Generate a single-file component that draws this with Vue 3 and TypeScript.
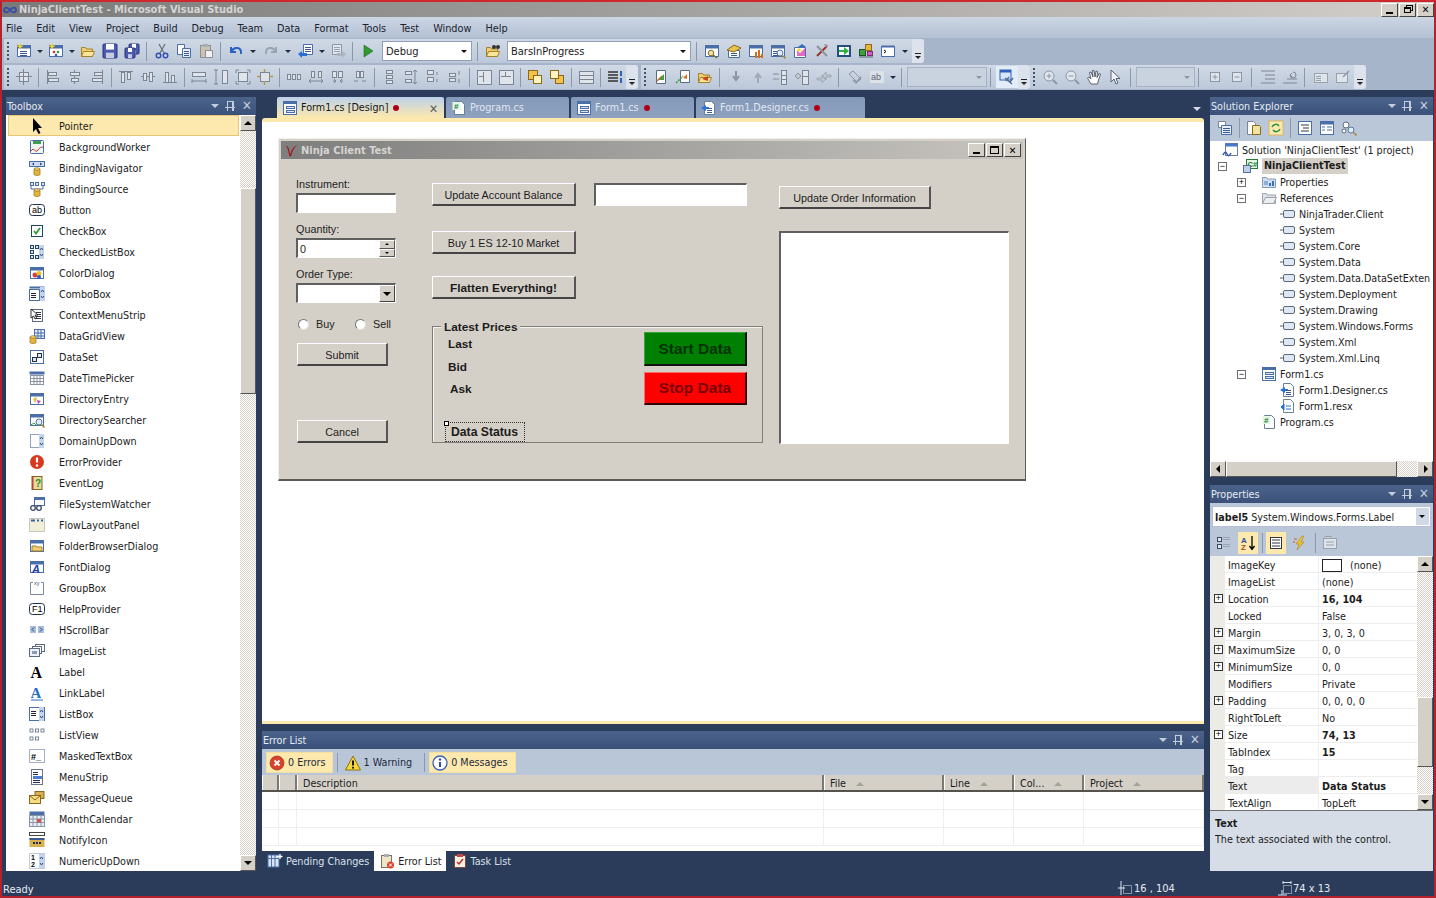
<script setup lang="ts">
// small svg helpers for the 16x16 icons
const win = (c: string) => `<rect x='1.5' y='2.5' width='13' height='11' fill='#fff' stroke='${c}'/><rect x='1.5' y='2.5' width='13' height='3' fill='${c}'/>`
const cyl = `<path d='M1 9v5.5c0 1.2 6 1.2 6 0V9z' fill='#e6b53d' stroke='#94701a' stroke-width='.7'/><ellipse cx='4' cy='9' rx='3' ry='1.2' fill='#f6dc84' stroke='#94701a' stroke-width='.7'/>`
const star = `<path d='M4 0l.9 2.3L7.5 3 5 4.2 4 6.5 3 4.2.5 3l2.6-.7z' fill='#f6d22c'/>`
const lines = (x: number, y: number, n: number, w = 5, c = '#3a5a90') => Array.from({ length: n }, (_, i) => `<path d='M${x} ${y + i * 2 + .5}h${w}' stroke='${c}'/>`).join('')
const folder = `<path d='M1.5 13.5v-9h4l1 1.5h6v7.5z' fill='#f1cf6e' stroke='#a5812a'/><path d='M1.5 13.5l2-5h11l-2 5z' fill='#fbe59b' stroke='#a5812a'/>`
const floppy = (x: number, y: number, s: number) => `<rect x='${x}' y='${y}' width='${s}' height='${s}' rx='1' fill='#4a5bb0' stroke='#2a3678'/><rect x='${x + 3}' y='${y}' width='${s - 6}' height='${s * .4}' fill='#fff'/><rect x='${x + 3}' y='${y + s * .62}' width='${s - 6}' height='${s * .38}' fill='#c8cbe4'/>`
const box = (x: number, y: number, w: number, h: number, c = '#7b8594') => `<rect x='${x + .5}' y='${y + .5}' width='${w}' height='${h}' fill='#dfe4ea' stroke='${c}'/>`
const vl = (x: number, y: number, h: number, c = '#7b8594') => `<path d='M${x + .5} ${y}v${h}' stroke='${c}' fill='none'/>`
const hl = (x: number, y: number, w: number, c = '#7b8594') => `<path d='M${x} ${y + .5}h${w}' stroke='${c}' fill='none'/>`
const updn = (x: number) => `<rect x='${x}' y='1' width='5' height='14' fill='#c4d4ec'/><path d='M${x + 1} 6l1.5-2 1.5 2M${x + 1} 10l1.5 2 1.5-2' stroke='#2f4a80' fill='none'/>`
const mag = `<circle cx='10' cy='10' r='3' fill='#dcecff' stroke='#5c7796'/><path d='M12.5 12.5l3 3' stroke='#a88a3a' stroke-width='1.6'/>`
const txt = (t: string, x: number, y: number, s: number, c = '#000', extra = '') => `<text x='${x}' y='${y}' font-size='${s}' fill='${c}' font-family='Liberation Sans' ${extra}>${t}</text>`

const icons: Record<string, string> = {
  // standard toolbar
  newproj: win('#4a6fa8') + lines(4, 8, 3, 7) + star,
  additem: win('#4a6fa8') + `<circle cx='6' cy='9' r='1.3' fill='#d03030'/><circle cx='10' cy='9' r='1.3' fill='#30a040'/><circle cx='8' cy='12' r='1.3' fill='#3060d0'/>` + star,
  open: folder,
  save: floppy(1, 1, 14),
  saveall: floppy(5, 1, 10) + floppy(1, 5, 10),
  cut: `<path d='M5 1l5 9M11 1l-5 9' stroke='#6a7484' stroke-width='1.3'/><circle cx='4.5' cy='12.5' r='2.3' fill='none' stroke='#3050b0' stroke-width='1.4'/><circle cx='11.5' cy='12.5' r='2.3' fill='none' stroke='#3050b0' stroke-width='1.4'/>`,
  copy: `<path d='M1.5 1.5h7v10h-7z' fill='#fff' stroke='#4a6fa8'/><path d='M6.5 5.5h8v9h-8z' fill='#e9f0fa' stroke='#4a6fa8'/>` + lines(8, 8, 3, 5),
  paste: `<rect x='2.5' y='2.5' width='10' height='12' fill='#c9c3b0' stroke='#8d8f94'/><rect x='5' y='1' width='5' height='3' fill='#a9adb4'/><path d='M7.5 7.5h7v7h-7z' fill='#eef1f5' stroke='#8d8f94'/>`,
  undo: `<path d='M3 4v5h5M3.5 8.5C6 3 14 4 13 11' fill='none' stroke='#2a60c0' stroke-width='2'/>`,
  redo: `<path d='M13 4v5H8M12.5 8.5C10 3 2 4 3 11' fill='none' stroke='#99a3b2' stroke-width='2'/>`,
  navback: `<path d='M5.5 1.5h9v10h-9z' fill='#fff' stroke='#4a6fa8'/>` + lines(7, 4, 3, 6) + `<path d='M0 11l4-3v2h5v3H4v2z' fill='#2a70d8'/>`,
  navfwd: `<path d='M2.5 1.5h9v10h-9z' fill='#e2e6ec' stroke='#8d97a6'/>` + lines(4, 4, 3, 6, '#9aa3b0') + `<path d='M16 11l-4-3v2H7v3h5v2z' fill='#aab3c0'/>`,
  play: `<path d='M4 2l9 6-9 6z' fill='#2f9a2f' stroke='#1f6a1f' stroke-width='.6'/>`,
  find: folder + `<circle cx='9' cy='4' r='2' fill='#333'/><circle cx='13' cy='4' r='2' fill='#333'/>`,
  w1: win('#4a6fa8') + `<circle cx='7' cy='10' r='2.8' fill='#f2e2a0' stroke='#7a6a30'/><path d='M9 12l4 3' stroke='#7a6a30' stroke-width='1.5'/>`,
  w2: `<path d='M2.5 7.5h11v7h-11z' fill='#fff' stroke='#4a6fa8'/><path d='M1 7l7-5 7 3-7 4z' fill='#e7c24c' stroke='#8a6a1a'/>` + lines(5, 10, 2, 6),
  w3: win('#4a6fa8') + `<path d='M7 15V9h2v6zM10 15V7h2v8zM13 15v-4h2v4z' fill='#d86a20'/>`,
  w4: win('#4a6fa8') + lines(3, 8, 3, 6) + mag,
  w5: `<path d='M2.5 4.5h11v10h-11z' fill='#fff' stroke='#4a6fa8'/><path d='M5 7l3 3 5-5v8H5z' fill='#e86ac0'/><path d='M4 8l3-3 3 3' fill='#f6d22c'/><path d='M10 1l4 3h-8z' fill='#3070c0'/>`,
  tools: `<path d='M3 13L13 3' stroke='#a03020' stroke-width='2'/><path d='M3 3l10 10' stroke='#8a929e' stroke-width='2'/><path d='M10 1l4 1-2 3z' fill='#8a929e'/>`,
  go: `<rect x='1' y='2' width='14' height='12' fill='#25507e'/><rect x='3' y='4' width='10' height='8' fill='#fff'/><path d='M3 7h5V4l5 4-5 4V9H3z' fill='#30b040'/>`,
  cls: `<rect x='1' y='13' width='14' height='2' fill='#8b98a8'/><rect x='1.5' y='6.5' width='6' height='6' fill='#40a040' stroke='#205020'/><rect x='7.5' y='1.5' width='6' height='6' fill='#e6b53d' stroke='#8a6a1a'/><rect x='9.5' y='8.5' width='5' height='4' fill='#d060c0' stroke='#7a3070'/>`,
  cmd: `<rect x='1.5' y='3.5' width='13' height='10' fill='#fff' stroke='#4a6fa8'/><rect x='1.5' y='2.5' width='13' height='2' fill='#4a6fa8'/><path d='M4 7l2 1.5L4 10' stroke='#000' fill='none'/>`,
  // layout toolbar, all greyed out
  snap: box(3, 3, 9, 9) + hl(0, 7, 16) + vl(7, 0, 16),
  al1: vl(2, 1, 14) + box(3, 3, 8, 3) + box(3, 9, 10, 3),
  al2: vl(7, 1, 14) + box(3, 3, 9, 3) + box(4, 9, 7, 3),
  al3: vl(13, 1, 14) + box(5, 3, 8, 3) + box(3, 9, 10, 3),
  al4: hl(1, 2, 14) + box(3, 3, 3, 10) + box(9, 3, 3, 7),
  al5: hl(1, 7, 14) + box(3, 4, 3, 7) + box(9, 3, 3, 9),
  al6: hl(1, 13, 14) + box(3, 3, 3, 10) + box(9, 6, 3, 7),
  sz1: box(1, 3, 13, 4) + `<path d='M1 12h14M1 10v4M15 10v4' stroke='#7b8594'/>`,
  sz2: box(9, 1, 5, 13) + `<path d='M3 1v14M1 1h4M1 15h4' stroke='#7b8594'/>`,
  sz3: box(3, 3, 9, 9) + `<path d='M1 1h3M1 1v3M15 1h-3M15 1v3M1 15h3M1 15v-3M15 15h-3M15 15v-3' stroke='#7b8594'/>`,
  sz4: box(3, 3, 9, 9) + `<path d='M7.5 0v3M7.5 12v4M0 7.5h3M12 7.5h4' stroke='#b69a4a' stroke-width='1.5'/>`,
  sp1: box(1, 5, 3, 5) + box(6, 5, 3, 5) + box(11, 5, 3, 5),
  sp2: box(3, 2, 3, 6) + box(10, 2, 3, 6) + `<path d='M1 12h14M1 12l2-2M1 12l2 2M15 12l-2-2M15 12l-2 2' stroke='#7b8594' fill='none'/>`,
  sp3: box(2, 2, 4, 6) + box(8, 2, 4, 6) + `<path d='M3 12h3M10 12h3M6 12l-2-2M6 12l-2 2M10 12l2-2M10 12l2 2' stroke='#7b8594' fill='none'/>`,
  sp4: box(4, 2, 3, 6) + box(8, 2, 3, 6) + `<path d='M2 12h4M10 12h4' stroke='#7b8594'/>`,
  vp1: box(5, 1, 6, 3) + box(5, 6, 6, 3) + box(5, 11, 6, 3),
  vp2: box(2, 2, 6, 3) + box(2, 10, 6, 3) + `<path d='M12 1v14M12 1l-2 2M12 1l2 2M12 15l-2-2M12 15l2-2' stroke='#7b8594' fill='none'/>`,
  vp3: box(2, 1, 6, 4) + box(2, 8, 6, 4) + `<path d='M12 3v3M12 10v3' stroke='#7b8594'/>`,
  vp4: box(2, 4, 6, 3) + box(2, 9, 6, 3) + `<path d='M12 2v4M12 10v4' stroke='#7b8594'/>`,
  ch: box(1, 1, 14, 14) + vl(7, 3, 10) + hl(3, 7, 4),
  cv: box(1, 1, 14, 14) + hl(3, 7, 10) + vl(7, 3, 4),
  front: `<rect x='1.5' y='1.5' width='9' height='9' fill='#f2c24a' stroke='#8a6a1a'/><rect x='6.5' y='6.5' width='8' height='8' fill='#fff3c0' stroke='#8a6a1a'/>`,
  back: `<rect x='6.5' y='6.5' width='8' height='8' fill='#f2c24a' stroke='#8a6a1a'/><rect x='1.5' y='1.5' width='8' height='8' fill='#fff3c0' stroke='#8a6a1a'/>`,
  grid: box(1, 2, 14, 12) + hl(1, 6, 14) + hl(1, 10, 14),
  tabord: `<path d='M1 3h10M1 6h10M1 9h10M1 12h10' stroke='#333' stroke-width='1.3'/><path d='M13 2h2v5h-2zM13 9h2v5h-2z' fill='#2f60b8'/>`,
  form1: `<path d='M3.5 1.5h9v13h-9z' fill='#fff' stroke='#5a6a80'/><path d='M5 11l6-6v6z' fill='#40a040'/><path d='M4 12l5-5' stroke='#d07020' stroke-width='1.5'/>`,
  form2: `<path d='M5.5 1.5h9v12h-9z' fill='#fff' stroke='#5a6a80'/><path d='M1 14l7-7' stroke='#30a040' stroke-width='1.5' stroke-dasharray='2 1'/><path d='M8 9l4-4v5z' fill='#d07020'/>`,
  form3: folder + `<path d='M5 10l6-3v5z' fill='#d04020'/>`,
  g1: `<path d='M8 2v8M5 7l3 4 3-4' stroke='#8b95a3' stroke-width='2' fill='none'/>`,
  g2: `<path d='M8 14V6M5 9l3-4 3 4' stroke='#a0a9b5' stroke-width='2' fill='none'/>`,
  g3: box(9, 1, 5, 14) + hl(9, 6, 5) + hl(9, 10, 5) + `<path d='M1 5h6M1 10h6' stroke='#99a3b0' stroke-width='1.5'/>`,
  g4: box(8, 1, 6, 14) + hl(8, 7, 6) + `<path d='M1 7l3-3 3 3-3 3z' fill='#c0c7d1' stroke='#8b95a3'/>`,
  g5: `<path d='M1 9h5V6l4 4-4 4v-3H1zM15 6h-5V3L6 7l4 4V8h5z' fill='#c0c7d1' stroke='#8b95a3' stroke-width='.6'/>`,
  g6: `<path d='M2 5l4-3 8 8-4 3z' fill='none' stroke='#8b95a3'/><path d='M6 11l3 3 5-6' fill='none' stroke='#8b95a3' stroke-width='1.5'/>`,
  ab: `<rect x='1' y='2' width='14' height='12' fill='#dde2e9'/>` + txt('ab', 2, 11, 9, '#5c6675'),
  bind: `<rect x='1' y='1' width='11' height='10' fill='#d8e6fb' stroke='#2f60b8'/><rect x='1' y='1' width='11' height='2.5' fill='#2f60b8'/><path d='M6 9l7 6M10 8l-3 4M14 9l-3 4' stroke='#4f6f90' stroke-width='1.5'/>`,
  zin: `<circle cx='7' cy='7' r='5' fill='#e2e7ee' stroke='#8b95a3'/><path d='M4.5 7h5M7 4.5v5' stroke='#8b95a3'/><path d='M11 11l4 4' stroke='#8b95a3' stroke-width='2'/>`,
  zout: `<circle cx='7' cy='7' r='5' fill='#e2e7ee' stroke='#8b95a3'/><path d='M4.5 7h5' stroke='#8b95a3'/><path d='M11 11l4 4' stroke='#8b95a3' stroke-width='2'/>`,
  hand: `<path d='M5 15L1.5 9l1.5-1 2 2L3.5 3.5 5 3l2 5-.5-6.5H8L9 8l1-6 1.5.5L11 8.5l2-4 1.5.5-2 6-1 4z' fill='#fff' stroke='#3a4454' stroke-width='.8'/>`,
  arrow: `<path d='M3 1v12l3-3 2 5 2-1-2-4.5h4z' fill='#eef1f5' stroke='#5a6474'/>`,
  plusb: `<rect x='3.5' y='3.5' width='9' height='9' fill='#dfe4ea' stroke='#8b95a3'/><path d='M5.5 8h5M8 5.5v5' stroke='#8b95a3'/>`,
  minusb: `<rect x='3.5' y='3.5' width='9' height='9' fill='#dfe4ea' stroke='#8b95a3'/><path d='M5.5 8h5' stroke='#8b95a3'/>`,
  ind1: `<path d='M1 2h14M5 6h10M5 10h10M1 14h14' stroke='#7b8594'/>`,
  ind2: `<path d='M1 14h14M5 10h10M11 3a3 3 0 1 1-3 3M8 6l2-2M8 6l2 2' stroke='#7b8594' fill='none'/>`,
  cm1: `<rect x='1.5' y='4.5' width='13' height='9' fill='#dfe4ea' stroke='#98a2af'/>` + lines(3, 7, 3, 5, '#98a2af'),
  cm2: `<rect x='1.5' y='4.5' width='11' height='9' fill='#dfe4ea' stroke='#98a2af'/><path d='M8 8l6-6' stroke='#8b95a3' stroke-width='1.5'/>`,
  // toolbox
  pointer: `<path d='M4 0v14l3-3 2.5 5 2-1L9 10h4z' fill='#000'/>`,
  bgw: `<rect x='1.5' y='1.5' width='13' height='13' rx='1' fill='#eef6ee' stroke='#4a6fa8'/><rect x='4' y='2' width='8' height='3' fill='#40a050'/><path d='M2 12c3-5 4 3 7-1s3-2 5-3' stroke='#c03030' fill='none'/>`,
  bnav: `<rect x='.5' y='1.5' width='15' height='5' fill='#cfdcf2' stroke='#4a6fa8'/><path d='M3 4l2-1.5v3zM13 4l-2-1.5v3z' fill='#204080'/><g transform='translate(4 0)'>${cyl}</g>`,
  bsrc: box(1, 1, 3, 3, '#4a6fa8') + box(6, 1, 3, 3, '#4a6fa8') + box(12, 1, 3, 3, '#4a6fa8') + `<path d='M2 5v3h12V5' stroke='#4a6fa8' fill='none'/><g transform='translate(4 0)'>${cyl}</g>`,
  button: `<rect x='.5' y='2.5' width='15' height='11' rx='3' fill='#fff' stroke='#20304a'/>` + txt('ab', 3, 11, 9),
  check: `<rect x='2.5' y='2.5' width='11' height='11' fill='#fff' stroke='#20456a'/><path d='M5 8l2 2.5L11 5' stroke='#2a9a3a' stroke-width='1.8' fill='none'/>`,
  clb: box(1, 1, 3, 3, '#20456a') + box(1, 6, 3, 3, '#20456a') + box(1, 11, 3, 3, '#20456a') + box(6, 1, 3, 3, '#20456a') + box(6, 11, 3, 3, '#20456a') + updn(10),
  color: win('#4a6fa8') + `<circle cx='6' cy='10' r='2.5' fill='#d04040'/><circle cx='10' cy='8.5' r='2.5' fill='#e8c030'/><circle cx='10' cy='12' r='2' fill='#3060c0'/>`,
  combo: `<rect x='.5' y='.5' width='15' height='2' fill='#4a6fa8'/><rect x='.5' y='3.5' width='10' height='11' fill='#fff' stroke='#4a6fa8'/>` + lines(2, 7, 3, 5, '#223') + updn(11),
  ctx: `<rect x='3.5' y='2.5' width='10' height='12' fill='#fff' stroke='#5a6a80'/>` + lines(7, 5, 4, 5, '#334') + `<path d='M2 2v9l2.5-2 1.5 3 1.5-1-1.5-3H9z' fill='#fff' stroke='#000' stroke-width='.8'/>`,
  dgv: `<rect x='5.5' y='1.5' width='10' height='9' fill='#e4ecf8' stroke='#4a6fa8'/><path d='M5.5 5h10M5.5 8h10M9 1.5v9M12 1.5v9' stroke='#4a6fa8'/>` + cyl,
  dataset: `<rect x='1.5' y='1.5' width='13' height='13' fill='#fff' stroke='#4a6fa8'/>` + box(3, 8, 4, 4, '#20304a') + box(8, 4, 4, 4, '#20304a'),
  dtp: `<rect x='.5' y='1.5' width='15' height='3' fill='#4a6fa8'/><rect x='1.5' y='5.5' width='13' height='9' fill='#fff' stroke='#8a93a2'/><path d='M1.5 8.5h13M1.5 11.5h13M5 5.5v9M8 5.5v9M11 5.5v9' stroke='#8a93a2'/>`,
  dirent: win('#4a6fa8') + `<path d='M4 8l3-2 1 2-2 4z' fill='#e8c040'/><path d='M8 9l4 1-3 3z' fill='#c040c0'/>`,
  dirs: win('#4a6fa8') + `<path d='M2 13l3-2 3 3' stroke='#30a040' fill='none'/>` + mag,
  dud: `<rect x='1.5' y='1.5' width='13' height='13' fill='#fff' stroke='#8fa3c0'/>` + updn(10),
  errp: `<circle cx='8' cy='8' r='7' fill='#d83a20'/><path d='M8 3.5v5' stroke='#fff' stroke-width='2.2'/><circle cx='8' cy='11.5' r='1.2' fill='#fff'/>`,
  evlog: `<rect x='3' y='1.5' width='10' height='13' fill='#e8dc9c' stroke='#7a6a20'/><rect x='3' y='1.5' width='1.5' height='13' fill='#c04040'/>` + txt('?', 6, 12, 10, '#209030', "font-weight='bold'"),
  fsw: `<rect x='5.5' y='1.5' width='10' height='8' fill='#fff' stroke='#4a6fa8'/><rect x='5.5' y='1.5' width='10' height='2.5' fill='#4a6fa8'/><circle cx='4' cy='12' r='2.3' fill='none' stroke='#3a4a60' stroke-width='1.3'/><circle cx='10' cy='12' r='2.3' fill='none' stroke='#3a4a60' stroke-width='1.3'/>`,
  flow: `<rect x='.5' y='1.5' width='15' height='13' fill='#f2efd8' stroke='#999' stroke-dasharray='1 1'/><path d='M2 3.5h4M8 3.5h2M12 3.5h2' stroke='#3a60a0' stroke-width='2'/>`,
  fbd: win('#4a6fa8') + `<path d='M3 13V8h4l1 1h5v4z' fill='#f1cf6e' stroke='#a5812a'/>`,
  fontd: win('#4a6fa8') + txt('A', 3, 13.5, 11, '#1a3fa0', "font-weight='bold' font-style='italic'"),
  group: `<path d='M4 2.5H1.5v12h13v-12H12' fill='none' stroke='#7a8aa0'/>` + txt('xy', 5, 5, 5.5, '#3a5070'),
  help: `<rect x='.5' y='2.5' width='15' height='11' rx='3' fill='#fff' stroke='#20304a'/>` + txt('F1', 3, 11, 9),
  hsb: `<rect x='1' y='4' width='6' height='7' fill='#a9bfe0'/><rect x='9' y='4' width='6' height='7' fill='#a9bfe0'/><path d='M5 5.5L3 7.5l2 2M11 5.5l2 2-2 2' stroke='#204080' fill='none'/>`,
  ilist: `<rect x='6.5' y='1.5' width='9' height='7' fill='#fff' stroke='#5a6a80'/><rect x='3.5' y='3.5' width='9' height='7' fill='#fff' stroke='#5a6a80'/><rect x='.5' y='5.5' width='10' height='8' fill='#eef' stroke='#5a6a80'/><rect x='3' y='8' width='5' height='3' fill='#8a9ab0'/>`,
  label: `<text x='1.5' y='14' font-size='16' fill='#000' font-weight='bold' font-family='Liberation Serif'>A</text>`,
  llabel: `<text x='1.5' y='13' font-size='15' fill='#2a6cc0' font-weight='bold' font-family='Liberation Serif'>A</text><path d='M2 15h12' stroke='#2a6cc0'/>`,
  lbox: `<rect x='.5' y='1.5' width='15' height='13' fill='#fff' stroke='#4a6fa8'/>` + lines(2, 5, 3, 5, '#223') + updn(10),
  lview: `<g fill='#fff' stroke='#5a6a80' stroke-width='.8'><rect x='1' y='2' width='3' height='3'/><rect x='6.5' y='2' width='3' height='3'/><rect x='12' y='2' width='3' height='3'/><rect x='1' y='10' width='3' height='3'/><rect x='6.5' y='10' width='3' height='3'/></g>`,
  mtb: `<rect x='.5' y='1.5' width='15' height='13' fill='#fff' stroke='#9fb0c8'/>` + txt('#_', 2, 11.5, 9, '#000', "font-weight='bold'"),
  menus: `<rect x='2.5' y='.5' width='11' height='15' fill='#fff' stroke='#6a7484'/>` + lines(4, 3, 2, 5, '#20304a') + `<rect x='4' y='7' width='9' height='3' fill='#4a7fd0'/>` + lines(4, 11, 2, 7, '#20304a'),
  mq: `<rect x='6' y='1.5' width='9' height='7' fill='#d8b050' stroke='#8a6a1a'/><rect x='.5' y='5.5' width='11' height='8' fill='#f6dc84' stroke='#8a6a1a'/><path d='M.5 5.5L6 10l5.5-4.5' fill='none' stroke='#8a6a1a'/>`,
  mcal: `<rect x='.5' y='.5' width='15' height='4' fill='#4a6fa8'/><rect x='.5' y='4.5' width='15' height='11' fill='#e8eefa' stroke='#8a93a2'/><path d='M.5 8h15M.5 11.5h15M4 4.5v11M8 4.5v11M12 4.5v11' stroke='#8a93a2'/><rect x='8' y='8' width='4' height='3.5' fill='#d05050'/>`,
  notify: `<rect x='.5' y='.5' width='15' height='3' fill='#fff' stroke='#444'/><rect x='.5' y='6' width='15' height='9' fill='#d8b050'/><rect x='.5' y='6' width='15' height='2' fill='#3a5a90'/><path d='M4 11h2M7 11h2M10 11h2' stroke='#20304a' stroke-width='2'/>`,
  nud: `<rect x='.5' y='.5' width='15' height='15' fill='#fff' stroke='#c0cde0'/>` + txt('1', 2, 7, 7, '#000', "font-weight='bold'") + txt('2', 2, 14, 7, '#000', "font-weight='bold'") + updn(10),
  // solution explorer
  sln: `<rect x='3.5' y='1.5' width='12' height='12' fill='#fff' stroke='#6a7e9a'/><rect x='3.5' y='1.5' width='12' height='3' fill='#4a78c8'/><path d='M1 13c2-4 3-3 4-1s2 3 4-1' stroke='#3a5ab0' stroke-width='1.6' fill='none'/>`,
  csproj: `<rect x='3.5' y='1.5' width='11' height='9' fill='#e6f6e6' stroke='#2a7a3a'/>` + txt('C#', 4.5, 9, 7.5, '#108030', "font-weight='bold'") + `<rect x='.5' y='7.5' width='7' height='7' fill='#bcd0ea' stroke='#5a7090'/>`,
  props: `<path d='M1.5 13.5v-10h4l1 1.5h8v8.5z' fill='#cfe0f4' stroke='#8a9ab0'/><path d='M8 12V9h2v3zM11 12V7h2v5z' fill='#3a70c0'/><path d='M3 8h4M3 10h4' stroke='#4a78c8'/>`,
  refs: `<path d='M1.5 13.5v-10h4l1 1.5h8v8.5z' fill='#dfe2e6' stroke='#9aa2ae'/><path d='M1.5 13.5l3-6h11l-3 6z' fill='#eceef1' stroke='#9aa2ae'/>`,
  ref: `<path d='M0 8h3' stroke='#556'/><rect x='3.5' y='4.5' width='11' height='7' rx='1.5' fill='#dfe7f2' stroke='#5a6a80'/>`,
  form: `<rect x='1.5' y='1.5' width='13' height='13' fill='#fff' stroke='#4a6fa8'/><rect x='1.5' y='1.5' width='13' height='2.5' fill='#4a6fa8'/>` + box(4, 6, 8, 2, '#4a6fa8') + box(4, 10, 8, 2, '#4a6fa8'),
  csfile: `<path d='M3.5 1.5h7l3 3v10h-10z' fill='#fff' stroke='#6a7e9a'/><path d='M0 8l5-3v2h3v2H5v2z' fill='#2a70d8'/>` + lines(6, 8, 3, 5),
  resx: `<path d='M3.5 1.5h7l3 3v10h-10z' fill='#fff' stroke='#6a7e9a'/><path d='M1 9l3-3v6zM6 8h5M6 11h5' fill='#2a70d8' stroke='#2a70d8'/>`,
  prog: `<path d='M3.5 1.5h7l3 3v10h-10z' fill='#fff' stroke='#6a7e9a'/><rect x='1.5' y='2' width='8' height='8' fill='#e6f6e6'/>` + txt('#', 3, 9, 8, '#108030', "font-weight='bold'"),
  // solution explorer toolbar
  se1: `<path d='M1.5 1.5h7v6h-7z' fill='#fff' stroke='#7a8494'/><path d='M4.5 5.5h10v9h-10z' fill='#e6edf7' stroke='#4a6fa8'/>` + lines(6, 8, 3, 7),
  se2: `<path d='M1.5 1.5h6l2 2v11h-8z' fill='#fff' stroke='#7a8494'/><path d='M6.5 5.5h7l1 1v8h-8z' fill='#f2e2a0' stroke='#8a6a1a'/>`,
  se3: `<rect x='1' y='1' width='14' height='14' fill='#fde9ad' stroke='#d8b860'/><path d='M4 7a4 4 0 0 1 7-1M12 9a4 4 0 0 1-7 1' stroke='#209040' stroke-width='1.5' fill='none'/>`,
  se4: `<rect x='1.5' y='1.5' width='13' height='13' fill='#fff' stroke='#4a6fa8'/><path d='M4 5h8M6 8h6M4 11h8' stroke='#334'/>`,
  se5: `<rect x='1.5' y='1.5' width='13' height='13' fill='#fff' stroke='#4a6fa8'/><rect x='1.5' y='1.5' width='13' height='3' fill='#4a6fa8'/><path d='M3 7h3M8 7h5M3 10h3M8 10h5' stroke='#4a6fa8'/>`,
  se6: `<circle cx='5' cy='5' r='3' fill='#fff' stroke='#5a6a80'/><circle cx='3' cy='11' r='2' fill='#fff' stroke='#5a6a80'/>` + mag,
  // properties toolbar
  pcat: box(1, 2, 4, 4, '#3a4a60') + box(1, 9, 4, 4, '#3a4a60') + lines(7, 2, 2, 7, '#9aa4b2') + lines(7, 9, 2, 7, '#9aa4b2'),
  paz: txt('A', 1, 7.5, 8, '#2a50a0', "font-weight='bold'") + txt('Z', 1, 15, 8, '#a05020', "font-weight='bold'") + `<path d='M12 1v13M9.5 11l2.5 3.5 2.5-3.5' stroke='#000' stroke-width='1.3' fill='none'/>`,
  pprop: `<rect x='2.5' y='2.5' width='11' height='11' fill='#fff' stroke='#334'/><path d='M4 5h8M4 8h8M4 11h8' stroke='#334'/>`,
  pevent: `<path d='M10 1L4 9h3l-2 6 7-8H9l3-6z' fill='#e8c030' stroke='#a87a1a' stroke-width='.5'/><path d='M2 4h3M1 7h2' stroke='#d06020'/>`,
  ppage: `<rect x='1.5' y='3.5' width='13' height='10' fill='#dfe4ea' stroke='#98a2af'/><rect x='3' y='1.5' width='6' height='2' fill='#c8ced6' stroke='#98a2af'/><path d='M4 7h8M4 10h8' stroke='#98a2af'/>`,
  // error list + bottom tabs
  err: `<circle cx='8' cy='8' r='7' fill='#d8422a' stroke='#8a2010' stroke-width='.6'/><path d='M5.5 5.5l5 5M10.5 5.5l-5 5' stroke='#fff' stroke-width='1.8'/>`,
  warn: `<path d='M8 1l7.5 14H.5z' fill='#f6d836' stroke='#8a7410'/><path d='M8 5.5v5' stroke='#000' stroke-width='1.8'/><circle cx='8' cy='12.7' r='1' fill='#000'/>`,
  info: `<circle cx='8' cy='8' r='7' fill='#fff' stroke='#3a60b0' stroke-width='1.3'/><path d='M8 7v5' stroke='#2a50a0' stroke-width='2'/><circle cx='8' cy='4.5' r='1.2' fill='#2a50a0'/>`,
  pend: `<rect x='1' y='2' width='11' height='12' fill='#d8e4f4' stroke='#4a6fa8'/><path d='M1 5.5h11M4.5 2v12M8 2v12' stroke='#4a6fa8'/><path d='M13 1v5M10.5 3.5h5' stroke='#fff' stroke-width='1.3'/>`,
  elist: `<rect x='2.5' y='2.5' width='10' height='12' fill='#efe6c8' stroke='#7a7464'/><rect x='5' y='1' width='5' height='3' fill='#a9adb4'/><circle cx='11.5' cy='12' r='3.5' fill='#d8422a'/><path d='M10 10.5l3 3M13 10.5l-3 3' stroke='#fff'/>`,
  tlist: `<rect x='2.5' y='2.5' width='11' height='12' fill='#f4f0e4' stroke='#7a4a3a'/><rect x='5' y='1' width='6' height='3' fill='#c04a4a'/><path d='M5 9l2 2 4-5' stroke='#c02a2a' stroke-width='1.5' fill='none'/>`,
  sizeloc: `<path d='M3 1v14M0 8h7' stroke='#dfe5ee'/><rect x='5.5' y='5.5' width='8' height='8' fill='none' stroke='#dfe5ee' stroke-dasharray='1 1'/>`,
  sizedim: `<path d='M1 15h9M5 10v5' stroke='#dfe5ee'/><path d='M6 1v3M14 1v3M6 2.5h8' stroke='#dfe5ee'/><rect x='6.5' y='5.5' width='8' height='8' fill='none' stroke='#dfe5ee' stroke-dasharray='1 1'/>`,
  logo: `<path d='M8 8C6 5 2 5 2 8s4 3 6 0 6-3 6 0-4 3-6 0z' fill='none' stroke='#3a4fa8' stroke-width='1.8'/>`,
  ninja: `<path d='M1 3c3 0 4 5 5 10C7 8 10 4 14 2 11 5 8 9 7 15H5C4 10 3 5 1 3z' fill='#a01818'/>`
}

const rows1 = ['g', 'newproj', 'a', 'additem', 'a', 'open', 'save', 'saveall', 's', 'cut', 'copy', 'paste', 's', 'undo', 'a2', 'redo', 'a2', 'navback', 'a', 'navfwd', 's', 'play', 'c:Debug:90', 's2', 'find', 'c:BarsInProgress:184', 's2', 'w1', 'w2', 'w3', 'w4', 'w5', 'tools', 'go', 'cls', 'cmd', 'a2', 'o']
const bars2 = [
  ['g', 'snap', 's', 'al1', 'al2', 'al3', 's', 'al4', 'al5', 'al6', 's', 'sz1', 'sz2', 'sz3', 'sz4', 's', 'sp1', 'sp2', 'sp3', 'sp4', 's', 'vp1', 'vp2', 'vp3', 'vp4', 's', 'ch', 'cv', 's', 'front', 'back', 's', 'grid', 's', 'tabord', 'o'],
  ['g', 'form1', 'form2', 'form3', 's', 'g1', 'g2', 'g3', 'g4', 'g5', 's', 'g6', 'ab', 'a', 's', 'c::80', 's', 'bind', 'o'],
  ['g', 'zin', 'zout', 'hand', 'arrow', 's', 'c::59', 's', 'plusb', 'minusb', 's', 'ind1', 'ind2', 's', 'cm1', 'cm2', 'o']
]
const menus = ['File', 'Edit', 'View', 'Project', 'Build', 'Debug', 'Team', 'Data', 'Format', 'Tools', 'Test', 'Window', 'Help']

const toolbox: [string, string][] = [
  ['pointer', 'Pointer'], ['bgw', 'BackgroundWorker'], ['bnav', 'BindingNavigator'], ['bsrc', 'BindingSource'], ['button', 'Button'],
  ['check', 'CheckBox'], ['clb', 'CheckedListBox'], ['color', 'ColorDialog'], ['combo', 'ComboBox'], ['ctx', 'ContextMenuStrip'],
  ['dgv', 'DataGridView'], ['dataset', 'DataSet'], ['dtp', 'DateTimePicker'], ['dirent', 'DirectoryEntry'], ['dirs', 'DirectorySearcher'],
  ['dud', 'DomainUpDown'], ['errp', 'ErrorProvider'], ['evlog', 'EventLog'], ['fsw', 'FileSystemWatcher'], ['flow', 'FlowLayoutPanel'],
  ['fbd', 'FolderBrowserDialog'], ['fontd', 'FontDialog'], ['group', 'GroupBox'], ['help', 'HelpProvider'], ['hsb', 'HScrollBar'],
  ['ilist', 'ImageList'], ['label', 'Label'], ['llabel', 'LinkLabel'], ['lbox', 'ListBox'], ['lview', 'ListView'],
  ['mtb', 'MaskedTextBox'], ['menus', 'MenuStrip'], ['mq', 'MessageQueue'], ['mcal', 'MonthCalendar'], ['notify', 'NotifyIcon'], ['nud', 'NumericUpDown']
]

const tabs = [
  { icon: 'form', name: 'Form1.cs [Design]', dirty: true, active: true, w: 167 },
  { icon: 'prog', name: 'Program.cs', dirty: false, active: false, w: 123 },
  { icon: 'form', name: 'Form1.cs', dirty: true, active: false, w: 123 },
  { icon: 'csfile', name: 'Form1.Designer.cs', dirty: true, active: false, w: 169 }
]

const tree = [
  { icon: 'sln', text: "Solution 'NinjaClientTest' (1 project)", lvl: 0 },
  { icon: 'csproj', text: 'NinjaClientTest', lvl: 1, exp: '-', bold: true },
  { icon: 'props', text: 'Properties', lvl: 2, exp: '+' },
  { icon: 'refs', text: 'References', lvl: 2, exp: '-' },
  ...['NinjaTrader.Client', 'System', 'System.Core', 'System.Data', 'System.Data.DataSetExten', 'System.Deployment', 'System.Drawing', 'System.Windows.Forms', 'System.Xml', 'System.Xml.Linq'].map((text) => ({ icon: 'ref', text, lvl: 3 })),
  { icon: 'form', text: 'Form1.cs', lvl: 2, exp: '-' },
  { icon: 'csfile', text: 'Form1.Designer.cs', lvl: 3 },
  { icon: 'resx', text: 'Form1.resx', lvl: 3 },
  { icon: 'prog', text: 'Program.cs', lvl: 2 }
] as { icon: string; text: string; lvl: number; exp?: string; bold?: boolean }[]

const propRows = [
  { n: 'ImageKey', v: '(none)', swatch: true },
  { n: 'ImageList', v: '(none)' },
  { n: 'Location', v: '16, 104', plus: true, b: true },
  { n: 'Locked', v: 'False' },
  { n: 'Margin', v: '3, 0, 3, 0', plus: true },
  { n: 'MaximumSize', v: '0, 0', plus: true },
  { n: 'MinimumSize', v: '0, 0', plus: true },
  { n: 'Modifiers', v: 'Private' },
  { n: 'Padding', v: '0, 0, 0, 0', plus: true },
  { n: 'RightToLeft', v: 'No' },
  { n: 'Size', v: '74, 13', plus: true, b: true },
  { n: 'TabIndex', v: '15', b: true },
  { n: 'Tag', v: '' },
  { n: 'Text', v: 'Data Status', b: true, sel: true },
  { n: 'TextAlign', v: 'TopLeft' }
] as { n: string; v: string; plus?: boolean; b?: boolean; sel?: boolean; swatch?: boolean }[]

const errCols = [
  { t: '', w: 17 }, { t: '', w: 18 }, { t: 'Description', w: 527 }, { t: 'File', w: 120, s: true },
  { t: 'Line', w: 70, s: true }, { t: 'Col...', w: 70, s: true }, { t: 'Project', w: 120, s: true }
] as { t: string; w: number; s?: boolean }[]
</script>

<template>
  <div class="ide">
    <div class="titlebar">
      <svg class="ic" viewBox="0 0 16 16" v-html="icons.logo"></svg>
      <span class="title-text">NinjaClientTest - Microsoft Visual Studio</span>
      <div class="win-btns">
        <span class="win-btn"><i class="b-min"></i></span>
        <span class="win-btn"><i class="b-rest"></i></span>
        <span class="win-btn x">✕</span>
      </div>
    </div>

    <div class="menubar">
      <span v-for="m in menus" :key="m" class="menu">{{ m }}</span>
    </div>

    <div class="toolrow first">
      <div class="bar">
        <template v-for="(t, i) in rows1" :key="i">
          <span v-if="t === 'g'" class="grip"></span>
          <span v-else-if="t === 's'" class="sep"></span>
          <span v-else-if="t === 's2'" class="sep wide"></span>
          <span v-else-if="t === 'a'" class="arr"></span>
          <span v-else-if="t === 'a2'" class="arr wide"></span>
          <span v-else-if="t === 'o'" class="over"></span>
          <span v-else-if="t.startsWith('c:')" class="tcombo" :style="{ width: t.split(':')[2] + 'px' }">{{ t.split(':')[1] }}</span>
          <span v-else class="tool"><svg class="ic" viewBox="0 0 16 16" v-html="icons[t]"></svg></span>
        </template>
      </div>
    </div>

    <div class="toolrow second">
      <div v-for="(b, bi) in bars2" :key="bi" class="bar">
        <template v-for="(t, i) in b" :key="i">
          <span v-if="t === 'g'" class="grip"></span>
          <span v-else-if="t === 's'" class="sep"></span>
          <span v-else-if="t === 'a'" class="arr"></span>
          <span v-else-if="t === 'o'" class="over"></span>
          <span v-else-if="t.startsWith('c:')" class="tcombo off" :style="{ width: t.split(':')[2] + 'px' }"></span>
          <span v-else class="tool" :class="{ on: t === 'bind' }"><svg class="ic" viewBox="0 0 16 16" v-html="icons[t]"></svg></span>
        </template>
      </div>
    </div>

    <div class="main">
      <!-- toolbox -->
      <section class="panel">
        <header class="phead">
          <span>Toolbox</span>
          <span class="pctl"><i class="tri"></i><i class="pin"></i><b>✕</b></span>
        </header>
        <div class="tb-body">
          <ul class="tb-list">
            <li v-for="(t, i) in toolbox" :key="t[1]" class="tb-item" :class="{ sel: i === 0 }">
              <svg class="ic" viewBox="0 0 16 16" v-html="icons[t[0]]"></svg>
              <span>{{ t[1] }}</span>
            </li>
          </ul>
          <div class="vscroll">
            <span class="sb-btn up"></span>
            <span class="track" style="height: 57px"></span>
            <span class="thumb" style="height: 206px"></span>
            <span class="track fill"></span>
            <span class="sb-btn down"></span>
          </div>
        </div>
      </section>

      <!-- center -->
      <div class="center">
        <div class="tabstrip">
          <div v-for="t in tabs" :key="t.name" class="doc-tab" :class="{ active: t.active }" :style="{ width: t.w + 'px' }">
            <svg class="ic" viewBox="0 0 16 16" v-html="icons[t.icon]"></svg>
            <span>{{ t.name }}</span>
            <i v-if="t.dirty" class="dirty"></i>
            <b v-if="t.active" class="tabx">✕</b>
          </div>
          <i class="tri strip-tri"></i>
        </div>

        <div class="designer">
          <div class="form">
            <div class="form-title">
              <svg class="ic" viewBox="0 0 16 16" v-html="icons.ninja"></svg>
              <span>Ninja Client Test</span>
              <div class="win-btns">
                <span class="win-btn"><i class="b-min"></i></span>
                <span class="win-btn"><i class="b-max"></i></span>
                <span class="win-btn x">✕</span>
              </div>
            </div>
            <div class="form-body">
              <div class="col-fields">
                <label class="flabel">Instrument:</label>
                <div class="input"></div>
                <label class="flabel mt">Quantity:</label>
                <div class="input"><span class="val">0</span><span class="spin"><i class="s-up"></i><i class="s-dn"></i></span></div>
                <label class="flabel mt">Order Type:</label>
                <div class="input"><span class="dropbtn"></span></div>
                <div class="radios">
                  <span class="radio"></span><span class="rlabel first">Buy</span>
                  <span class="radio"></span><span class="rlabel">Sell</span>
                </div>
                <button class="btn small submit">Submit</button>
                <button class="btn small cancel">Cancel</button>
              </div>

              <div class="col-actions">
                <div class="acct-row">
                  <button class="btn action">Update Account Balance</button>
                  <div class="input acct"></div>
                </div>
                <button class="btn action buy">Buy 1 ES 12-10 Market</button>
                <button class="btn action flatten">Flatten Everything!</button>
                <div class="group">
                  <span class="legend">Latest Prices</span>
                  <div class="prices">
                    <span>Last</span>
                    <span>Bid</span>
                    <span class="ask">Ask</span>
                    <span class="data-status"><i class="handle"></i>Data Status</span>
                  </div>
                  <div class="feed">
                    <button class="feed-btn start">Start Data</button>
                    <button class="feed-btn stop">Stop Data</button>
                  </div>
                </div>
              </div>

              <div class="col-order">
                <button class="btn order">Update Order Information</button>
                <div class="input memo"></div>
              </div>
            </div>
          </div>
        </div>

        <section class="errlist">
          <header class="phead">
            <span>Error List</span>
            <span class="pctl"><i class="tri"></i><i class="pin"></i><b>✕</b></span>
          </header>
          <div class="err-tools">
            <span class="err-btn on"><svg class="ic" viewBox="0 0 16 16" v-html="icons.err"></svg>0 Errors</span>
            <i class="err-sep"></i>
            <span class="err-btn"><svg class="ic" viewBox="0 0 16 16" v-html="icons.warn"></svg>1 Warning</span>
            <i class="err-sep"></i>
            <span class="err-btn on"><svg class="ic" viewBox="0 0 16 16" v-html="icons.info"></svg>0 Messages</span>
          </div>
          <div class="err-head">
            <span v-for="(c, i) in errCols" :key="i" class="err-col" :style="{ width: c.w + 'px' }">{{ c.t }}<i v-if="c.s" class="sort"></i></span>
          </div>
          <div class="err-rows">
            <div v-for="r in 3" :key="r" class="err-row">
              <span v-for="(c, i) in errCols" :key="i" :style="{ width: c.w + 'px' }"></span>
            </div>
          </div>
        </section>

        <div class="bottabs">
          <span class="bot-tab"><svg class="ic" viewBox="0 0 16 16" v-html="icons.pend"></svg>Pending Changes</span>
          <span class="bot-tab active"><svg class="ic" viewBox="0 0 16 16" v-html="icons.elist"></svg>Error List</span>
          <span class="bot-tab"><svg class="ic" viewBox="0 0 16 16" v-html="icons.tlist"></svg>Task List</span>
        </div>
      </div>

      <!-- right side -->
      <div class="right">
        <section class="panel solution">
          <header class="phead">
            <span>Solution Explorer</span>
            <span class="pctl"><i class="tri"></i><i class="pin"></i><b>✕</b></span>
          </header>
          <div class="ptools se-tools">
            <svg class="ic" viewBox="0 0 16 16" v-html="icons.se1"></svg>
            <i class="ptsep"></i>
            <svg class="ic" viewBox="0 0 16 16" v-html="icons.se2"></svg>
            <svg class="ic" viewBox="0 0 16 16" v-html="icons.se3"></svg>
            <i class="ptsep"></i>
            <svg class="ic" viewBox="0 0 16 16" v-html="icons.se4"></svg>
            <svg class="ic" viewBox="0 0 16 16" v-html="icons.se5"></svg>
            <svg class="ic" viewBox="0 0 16 16" v-html="icons.se6"></svg>
          </div>
          <div class="tree">
            <div v-for="n in tree" :key="n.text" class="node" :class="'lvl' + n.lvl">
              <span class="exp" :class="{ shown: n.exp }">{{ n.exp === '-' ? '−' : n.exp }}</span>
              <svg class="ic" viewBox="0 0 16 16" v-html="icons[n.icon]"></svg>
              <span class="ntext" :class="{ bold: n.bold }">{{ n.text }}</span>
            </div>
          </div>
          <div class="hscroll">
            <span class="sb-btn left"></span>
            <span class="thumb h"></span>
            <span class="track fill"></span>
            <span class="sb-btn right-b"></span>
          </div>
        </section>

        <section class="panel properties">
          <header class="phead">
            <span>Properties</span>
            <span class="pctl"><i class="tri"></i><i class="pin"></i><b>✕</b></span>
          </header>
          <div class="prop-combo">
            <div class="pc-inner"><b>label5</b> System.Windows.Forms.Label<span class="pc-drop"></span></div>
          </div>
          <div class="ptools prop-tools">
            <svg class="ic" viewBox="0 0 16 16" v-html="icons.pcat"></svg>
            <span class="pt-on"><svg class="ic" viewBox="0 0 16 16" v-html="icons.paz"></svg></span>
            <i class="ptsep"></i>
            <span class="pt-on"><svg class="ic" viewBox="0 0 16 16" v-html="icons.pprop"></svg></span>
            <svg class="ic" viewBox="0 0 16 16" v-html="icons.pevent"></svg>
            <i class="ptsep"></i>
            <svg class="ic" viewBox="0 0 16 16" v-html="icons.ppage"></svg>
          </div>
          <div class="grid-wrap">
            <div class="pgrid">
              <div v-for="r in propRows" :key="r.n" class="prow">
                <span class="pgut"><i v-if="r.plus" class="pbox">+</i></span>
                <span class="pname" :class="{ sel: r.sel }">{{ r.n }}</span>
                <span class="pval" :class="{ bold: r.b }"><i v-if="r.swatch" class="swatch"></i>{{ r.v }}</span>
              </div>
            </div>
            <div class="vscroll narrow">
              <span class="sb-btn up"></span>
              <span class="track" style="height: 125px"></span>
              <span class="thumb" style="height: 70px"></span>
              <span class="track fill"></span>
              <span class="sb-btn down"></span>
            </div>
          </div>
          <div class="pdesc">
            <strong>Text</strong>
            <span>The text associated with the control.</span>
          </div>
        </section>
      </div>
    </div>

    <footer class="statusbar">
      <span class="st-ready">Ready</span>
      <span class="st-pos"><svg class="ic" viewBox="0 0 16 16" v-html="icons.sizeloc"></svg>16 , 104</span>
      <span class="st-size"><svg class="ic" viewBox="0 0 16 16" v-html="icons.sizedim"></svg>74 x 13</span>
    </footer>
  </div>
</template>

<style>
html, body { margin: 0; padding: 0; overflow: hidden; }
</style>

<style scoped>
* { box-sizing: border-box; }
i { font-style: normal; display: block; }
.ide {
  width: 1436px;
  height: 898px;
  border: 2px solid #b5222e;
  border-top-color: #d0272d;
  background: #2b3c5b;
  display: flex;
  flex-direction: column;
  font: 10.7px "DejaVu Sans", sans-serif;
  font-stretch: condensed;
  color: #1c1c1c;
  overflow: hidden;
}
.ic { width: 16px; height: 16px; flex: none; display: block; }

.titlebar {
  height: 15px;
  flex: none;
  display: flex;
  align-items: center;
  background: linear-gradient(90deg, #7a7a7a, #d2cec9);
  color: #d4d4d4;
  font-weight: bold;
  font-size: 11px;
}
.title-text { margin-left: 1px; }
.win-btns { margin-left: auto; display: flex; gap: 1px; }
.win-btn {
  width: 17px;
  height: 14px;
  background: #d4d0c8;
  border: 1px solid;
  border-color: #fff #444 #444 #fff;
  display: flex;
  align-items: center;
  justify-content: center;
  font-size: 10px;
  color: #000;
  font-weight: bold;
  position: relative;
}
.b-min { width: 7px; height: 2px; background: #000; margin-top: 6px; }
.b-max { width: 9px; height: 8px; border: 1px solid #000; border-top-width: 2px; }
.b-rest { width: 7px; height: 6px; border: 1px solid #000; border-top-width: 2px; box-shadow: 2px -2px 0 -1px #d4d0c8, 2px -2px 0 0 #000; }

.menubar {
  height: 21px;
  flex: none;
  background: linear-gradient(#ccd6e3, #b4c1d4);
  display: flex;
  align-items: center;
  padding: 1px 0 0 4px;
  gap: 14px;
  font-size: 10.8px;
  color: #1a2230;
}

.toolrow {
  height: 26px;
  flex: none;
  background: #a7b5ca;
  display: flex;
  align-items: center;
}
.bar {
  height: 24px;
  display: flex;
  align-items: center;
  background: linear-gradient(#d0d9e5, #bcc8d9);
  border-radius: 0 3px 3px 0;
}
.toolrow .bar:first-child { margin: 0 3px 0 2px; }
.grip {
  width: 9px;
  height: 18px;
  flex: none;
  background: radial-gradient(circle at 4px 1px, #44536a 1px, transparent 1.3px) 0 0 / 9px 4px;
}
.tool { width: 22px; height: 22px; flex: none; display: flex; align-items: center; justify-content: center; }
.tool.on { background: #e3edf9; }
.sep { width: 8px; height: 19px; flex: none; position: relative; }
.sep::after { content: ""; position: absolute; left: 3px; top: 0; bottom: 0; width: 1px; background: #8b98aa; }
.sep.wide { width: 10px; }
.sep.wide::after { left: 5px; }
.second .sep { width: 7px; }
.second .bar + .bar .sep { width: 9px; }
.arr { width: 10px; height: 22px; flex: none; position: relative; }
.arr::after { content: ""; position: absolute; left: 2px; top: 10px; border: 3px solid transparent; border-top-color: #222b3a; border-bottom: 0; }
.arr.wide { width: 13px; }
.arr.wide::after { left: 3px; }
.over { width: 12px; height: 24px; flex: none; background: #dce3ec; position: relative; border-radius: 0 3px 3px 0; }
.over::after { content: ""; position: absolute; left: 3px; top: 14px; width: 6px; height: 1px; background: #222; }
.over::before { content: ""; position: absolute; left: 3px; top: 17px; border: 3px solid transparent; border-top-color: #222; border-bottom: 0; }
.tcombo {
  height: 20px;
  flex: none;
  margin-left: 3px;
  background: #fff;
  border: 1px solid #8fa0b8;
  display: flex;
  align-items: center;
  padding-left: 3px;
  font-size: 11px;
  position: relative;
}
.tcombo::after { content: ""; position: absolute; right: 4px; top: 8px; border: 3px solid transparent; border-top-color: #111; border-bottom: 0; }
.tcombo.off { background: #c9d2df; border-color: #a6b2c4; margin-left: 0; }
.tcombo.off::after { border-top-color: #8b95a3; }

.main {
  flex: none;
  display: grid;
  grid-template-columns: 250px 942px 223px;
  grid-template-rows: 774px;
  column-gap: 6px;
  padding: 7px 1px 0 4px;
  height: 781px;
}
.panel { display: flex; flex-direction: column; min-height: 0; background: #fff; }
.phead {
  height: 18px;
  flex: none;
  display: flex;
  align-items: center;
  justify-content: space-between;
  background: linear-gradient(#4b638b, #3b5179);
  color: #e6ebf3;
  padding: 0 0 0 1px;
}
.pctl { display: flex; align-items: center; gap: 8px; padding-right: 3px; color: #c3cddc; }
.pctl b { font-size: 13px; width: 11px; font-weight: normal; line-height: 14px; }
.tri { width: 0; height: 0; border: 4px solid transparent; border-top-color: #c3cddc; border-bottom: 0; }
.pin { width: 7px; height: 10px; border: 1px solid #c3cddc; border-width: 1px 2px 0 1px; position: relative; }
.pin::after { content: ""; position: absolute; left: -3px; right: -3px; top: 5px; height: 1px; background: #c3cddc; }

.tb-body { flex: 1; display: flex; min-height: 0; background: #fff; }
.tb-list { flex: 1; list-style: none; margin: 0; padding: 0 1px 0 2px; overflow: hidden; }
.tb-item { height: 21px; display: flex; align-items: center; gap: 14px; padding: 1px 0 0 21px; }
.tb-item.sel { background: #fde9ad; box-shadow: inset 0 0 0 1px #e8c675; }

.vscroll { width: 16px; display: flex; flex-direction: column; flex: none; }
.sb-btn {
  width: 16px;
  height: 16px;
  flex: none;
  background: #d4d0c8;
  border: 1px solid;
  border-color: #fff #555 #555 #fff;
  position: relative;
}
.sb-btn::after { content: ""; position: absolute; left: 3px; top: 5px; border: 4px solid transparent; }
.sb-btn.up::after { border-bottom-color: #000; border-top: 0; }
.sb-btn.down::after { border-top-color: #000; border-bottom: 0; }
.sb-btn.left::after { border-right-color: #000; border-left: 0; left: 5px; top: 3px; }
.sb-btn.right-b::after { border-left-color: #000; border-right: 0; left: 6px; top: 3px; }
.track { display: block; flex: none; background: repeating-conic-gradient(#fff 0 25%, #d4d0c8 0 50%) 0 0 / 2px 2px; }
.track.fill { flex: 1; }
.thumb { display: block; flex: none; background: #d4d0c8; border: 1px solid; border-color: #fff #555 #555 #fff; }
.thumb.h { width: 171px; }

.center { display: flex; flex-direction: column; min-height: 0; }
.tabstrip { height: 21px; flex: none; display: flex; align-items: flex-end; padding-left: 15px; gap: 2px; position: relative; }
.doc-tab {
  height: 21px;
  display: flex;
  align-items: center;
  gap: 3px;
  padding-left: 5px;
  background: linear-gradient(#8499b8, #8ea2c0);
  color: #e2e7ef;
  border-radius: 2px 2px 0 0;
  position: relative;
}
.doc-tab.active { background: linear-gradient(#bdd0ea, #fde9ad); color: #161616; }
.dirty { width: 6px; height: 6px; border-radius: 50%; background: #b00016; margin-left: 2px; }
.tabx { position: absolute; right: 6px; top: 5px; font-size: 12px; color: #5c5c5c; font-weight: normal; }
.strip-tri { position: absolute; right: 3px; top: 10px; border-top-color: #d5dce6; }

.designer {
  flex: 1;
  min-height: 0;
  background: #fff;
  border-top: 4px solid #fde9ad;
  border-bottom: 3px solid #fde9ad;
  border-radius: 3px 3px 0 0;
  padding: 16px 0 0 16px;
}
.form {
  width: 748px;
  height: 343px;
  background: #d4d0c8;
  border: 1px solid;
  border-color: #f1efeb #5c5a56 #5c5a56 #f1efeb;
  border-bottom-width: 2px;
  padding: 2px;
  display: flex;
  flex-direction: column;
}
.form-title {
  height: 18px;
  flex: none;
  display: flex;
  align-items: center;
  gap: 2px;
  background: linear-gradient(90deg, #7e7e7e, #c8c5c0);
  color: #d6d4d0;
  font-weight: bold;
  font-size: 11px;
  padding-left: 4px;
}
.form-title .ic { width: 14px; height: 14px; }
.form-title .win-btns { padding-right: 2px; }
.form-body {
  flex: 1;
  display: flex;
  padding: 18px 0 0 15px;
  align-items: flex-start;
  font: 10.8px "Liberation Sans", sans-serif;
}
.col-fields { width: 100px; display: flex; flex-direction: column; }
.flabel { height: 16px; line-height: 14px; color: #222; }
.flabel.mt { margin-top: 9px; }
.input {
  height: 20px;
  background: #fff;
  border: 1px solid;
  border-color: #5f5f5f #fff #fff #5f5f5f;
  border-width: 2px 1px 1px 2px;
  position: relative;
  display: flex;
  align-items: center;
}
.val { padding-left: 2px; }
.spin { position: absolute; right: 0; top: 0; bottom: 0; width: 16px; display: flex; flex-direction: column; }
.spin i { flex: 1; background: #d4d0c8; border: 1px solid; border-color: #fff #555 #555 #fff; position: relative; }
.spin i::after { content: ""; position: absolute; left: 5px; top: 2px; border: 2px solid transparent; }
.s-up::after { border-bottom-color: #000 !important; border-top: 0 !important; }
.s-dn::after { border-top-color: #000 !important; border-bottom: 0 !important; }
.dropbtn { position: absolute; right: 0; top: 0; bottom: 0; width: 16px; background: #d4d0c8; border: 1px solid; border-color: #fff #444 #444 #fff; }
.dropbtn::after { content: ""; position: absolute; left: 3px; top: 6px; border: 4px solid transparent; border-top-color: #000; border-bottom: 0; }
.radios { display: flex; align-items: center; margin-top: 14px; height: 14px; padding-left: 2px; }
.radio { width: 11px; height: 11px; flex: none; border-radius: 50%; background: #fff; border: 1px solid #777; border-right-color: #ddd; border-bottom-color: #ddd; }
.rlabel { margin-left: 7px; flex: none; color: #222; }
.rlabel.first { width: 39px; }
.btn {
  font: inherit;
  color: #1c1c1c;
  background: #d4d0c8;
  border: 1px solid;
  border-color: #fff #555 #444 #fff;
  border-bottom-width: 2px;
  border-right-width: 2px;
  height: 23px;
  padding: 1px 0 0;
}
.btn.small { width: 91px; margin-left: 1px; }
.submit { margin-top: 12px; }
.cancel { margin-top: 54px; }
.col-actions { width: 331px; margin: 6px 0 0 36px; display: flex; flex-direction: column; }
.acct-row { display: flex; align-items: flex-start; gap: 18px; }
.action { width: 144px; flex: none; }
.input.acct { width: 153px; height: 23px; }
.buy { margin-top: 25px; }
.flatten { margin-top: 22px; font-weight: bold; font-size: 11.8px; }
.group {
  margin-top: 27px;
  height: 117px;
  border: 1px solid #7f7d78;
  box-shadow: inset 1px 1px 0 #f4f3f0;
  position: relative;
  display: flex;
  justify-content: space-between;
  font-weight: bold;
  font-size: 11.8px;
}
.legend { position: absolute; left: 8px; top: -7px; background: #d4d0c8; padding: 0 3px; line-height: 14px; }
.prices { display: flex; flex-direction: column; padding: 9px 0 0 15px; }
.prices span { height: 22.5px; line-height: 16px; }
.prices .ask { padding-left: 2px; }
.prices .data-status {
  margin: 18px 0 0 -3px;
  width: 80px;
  height: 20px;
  line-height: 18px;
  border: 1px dotted #333;
  padding-left: 5px;
  position: relative;
  font-size: 12.2px;
}
.handle { position: absolute; left: -2px; top: -2px; width: 5px; height: 5px; background: #fff; border: 1px solid #000; }
.feed { width: 103px; margin: 5px 15px 0 0; display: flex; flex-direction: column; gap: 6px; }
.feed-btn {
  font: bold 15.5px "Liberation Sans", sans-serif;
  height: 34px;
  border: 1px solid;
  border-bottom-width: 2px;
  border-right-width: 2px;
  padding: 0;
}
.start { background: #008000; color: #033303; border-color: #36a336 #111 #111 #36a336; }
.stop { background: #ff0000; color: #7a0000; border-color: #ff6a6a #300 #300 #ff6a6a; height: 33px; }
.col-order { margin: 9px 0 0 16px; display: flex; flex-direction: column; }
.order { width: 152px; }
.input.memo { width: 230px; height: 213px; margin-top: 22px; }

.errlist { height: 120px; flex: none; margin-top: 7px; background: #fff; display: flex; flex-direction: column; }
.err-tools { height: 26px; flex: none; background: #b9c6d8; display: flex; align-items: center; padding-left: 4px; gap: 4px; }
.err-btn { height: 21px; display: flex; align-items: center; gap: 3px; padding: 1px 7px 0 3px; color: #1c2a3c; }
.err-btn + .err-sep + .err-btn { padding-right: 8px; }
.err-btn.on { background: #fde9ad; box-shadow: inset 0 0 0 1px #f4dea0; }
.err-sep { width: 1px; height: 19px; background: #8b98aa; }
.err-head { height: 17px; flex: none; display: flex; background: #d4d0c8; border-bottom: 2px solid #55534e; }
.err-col { display: flex; align-items: center; padding: 2px 0 0 6px; border-right: 2px solid #7b7972; box-shadow: inset 1px 0 0 #fff; }
.sort { margin-left: 10px; width: 0; height: 0; border: 4px solid transparent; border-bottom-color: #a5a299; border-top: 0; }
.err-rows { flex: 1; overflow: hidden; }
.err-row { height: 18px; display: flex; border-bottom: 1px solid #efefef; }
.err-row span { border-right: 1px solid #efefef; }

.bottabs { height: 20px; flex: none; display: flex; align-items: stretch; padding-left: 2px; gap: 3px; }
.bot-tab { display: flex; align-items: center; gap: 3px; padding: 0 2px 0 3px; color: #d9e0ea; }
.bot-tab.active { background: #fff; color: #1c1c1c; padding: 0 4px 0 5px; }

.right { display: flex; flex-direction: column; min-height: 0; }
.solution { height: 380px; flex: none; }
.properties { flex: 1; margin-top: 8px; min-height: 0; }
.ptools { flex: none; background: #bac7d9; display: flex; align-items: center; gap: 6px; padding-left: 7px; }
.se-tools { height: 26px; }
.ptsep { width: 1px; height: 20px; background: #8b98aa; }
.tree { flex: 1; background: #fff; padding-top: 1px; overflow: hidden; }
.node { height: 16px; display: flex; align-items: center; white-space: nowrap; }
.exp { width: 9px; height: 9px; flex: none; font-size: 9px; line-height: 7px; text-align: center; color: #000; font-family: "Liberation Sans", sans-serif; margin-right: 15px; }
.exp.shown { border: 1px solid #6f6f6f; background: #fff; }
.lvl0 { padding-left: 3px; }
.lvl0 .exp { margin-right: 0; }
.lvl1 { padding-left: 8px; }
.lvl1 .exp { margin-right: 16px; }
.lvl2 { padding-left: 27px; }
.lvl3 { padding-left: 46px; }
.lvl3 .exp { margin-right: 15px; visibility: hidden; }
.node .ntext { margin-left: 3px; }
.lvl0 .ntext { margin-left: 4px; }
.ntext.bold { font-weight: bold; background: #d4d0c8; padding: 0 2px; height: 16px; line-height: 15px; }
.hscroll { height: 16px; flex: none; display: flex; background: #fff; }

.prop-combo { height: 27px; flex: none; background: #bac7d9; padding: 3px 2px; }
.pc-inner { height: 21px; background: #fff; border: 1px solid #b5c1d1; display: flex; align-items: center; padding: 1px 0 0 2px; gap: 3px; position: relative; }
.pc-inner b { font-weight: bold; }
.pc-drop { position: absolute; right: 1px; top: 1px; bottom: 1px; width: 13px; background: #d0d9e5; }
.pc-drop::after { content: ""; position: absolute; left: 3px; top: 7px; border: 3px solid transparent; border-top-color: #111; border-bottom: 0; }
.prop-tools { height: 26px; gap: 3px; padding-left: 3px; }
.prop-tools .ptsep { margin: 0 .5px; }
.prop-tools > .ic { margin: 0 3px; }
.pt-on { width: 20px; height: 22px; background: #fde9ad; display: flex; align-items: center; justify-content: center; }
.grid-wrap { height: 255px; flex: none; display: flex; background: #fff; overflow: hidden; border-bottom: 1px solid #6f6f6f; }
.pgrid { flex: 1; }
.prow { height: 17px; display: flex; align-items: stretch; border-bottom: 1px solid #ededed; white-space: nowrap; }
.pgut { width: 15px; flex: none; background: #ecebe6; display: flex; align-items: center; justify-content: center; padding-left: 2px; }
.pbox { width: 9px; height: 9px; border: 1px solid #333; background: #fff; font-size: 9px; line-height: 6px; text-align: center; font-family: "Liberation Sans", sans-serif; color: #000; }
.pname { width: 94px; flex: none; padding: 2px 0 0 3px; border-right: 1px solid #ededed; display: flex; align-items: center; }
.pname.sel { background: #ececec; }
.pval { padding: 2px 0 0 3px; display: flex; align-items: center; }
.pval.bold { font-weight: bold; }
.swatch { width: 20px; height: 13px; border: 1px solid #222; margin-right: 8px; background: #fff; }
.pdesc { flex: 1; background: #d6dde7; padding: 6px 5px; display: flex; flex-direction: column; gap: 3px; }
.pdesc strong { font-weight: bold; }

.statusbar { height: 25px; flex: none; display: flex; align-items: flex-end; color: #e6eaf0; padding: 0 0 0 1px; font-size: 11px; }
.st-ready { width: 1115px; flex: none; }
.st-pos { width: 159px; flex: none; display: flex; align-items: center; }
.st-size { display: flex; align-items: center; }
</style>
